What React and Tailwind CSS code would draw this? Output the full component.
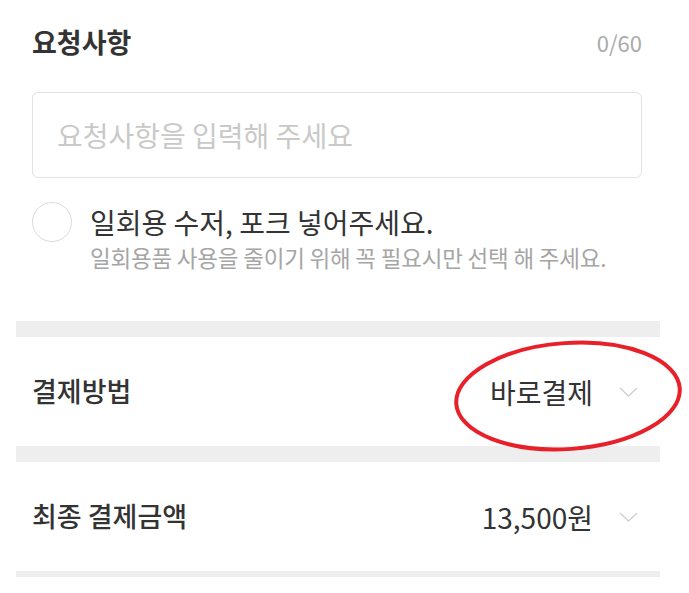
import React from "react"

const font = { fontFamily: '"Noto Sans CJK KR", "Noto Sans", sans-serif' }

function Chevron() {
    return <svg width="19" height="10" viewBox="0 0 19 10" fill="none" className="ml-[26px]">
        <path d="M1 1l8.5 8 8.5-8" stroke="#d0d0d0" strokeWidth="1.4" />
    </svg>
}

function Row({ label, value }) {
    return <div className="h-[109px] flex items-center justify-between px-4">
        <span className="text-[27px] text-[#333] font-medium">{label}</span>
        <div className="flex items-center pr-[6px]">
            <span className="text-[28px] text-[#333]">{value}</span>
            <Chevron />
        </div>
    </div>
}

export default function App() {
    return <div className="relative w-[689px] h-[593px] bg-white overflow-hidden" style={font}>
        <div className="ml-4 w-[644px]">
            {/* request */}
            <div className="pl-4 pr-[18px]">
                <div className="flex items-center justify-between h-[38px] mt-[23px]">
                    <h2 className="text-[27px] font-bold text-[#333]">요청사항</h2>
                    <span className="text-[22px] text-[#aaa]">0/60</span>
                </div>
                <div className="mt-[31px] h-[86px] border border-[#e2e2e2] rounded-[6px] flex items-center px-6">
                    <span className="text-[28px] text-[#c9c9c9]">요청사항을 입력해 주세요</span>
                </div>
                <div className="flex mt-[24px]">
                    <div className="w-[40px] h-[40px] rounded-full border-[1.5px] border-[#dadada] shrink-0" />
                    <div className="ml-[18px]">
                        <p className="text-[28px] leading-[40px] text-[#333]">일회용 수저, 포크 넣어주세요.</p>
                        <p className="text-[22.5px] leading-[30px] text-[#a5a5a5] tracking-[-0.2px]">일회용품 사용을 줄이기 위해 꼭 필요시만 선택 해 주세요.</p>
                    </div>
                </div>
            </div>
            <div className="mt-[49px] h-[16px] bg-[#eeeeee]" />
            <Row label="결제방법" value="바로결제" />
            <div className="h-[16px] bg-[#eeeeee]" />
            <Row label="최종 결제금액" value="13,500원" />
            <div className="h-[6px] bg-[#eeeeee]" />
        </div>
        <svg className="absolute left-0 top-0" width="689" height="593">
            <ellipse cx="568" cy="396" rx="112" ry="53" fill="none" stroke="#e8202a" strokeWidth="4" transform="rotate(-4 568 396)" />
        </svg>
    </div>
}
